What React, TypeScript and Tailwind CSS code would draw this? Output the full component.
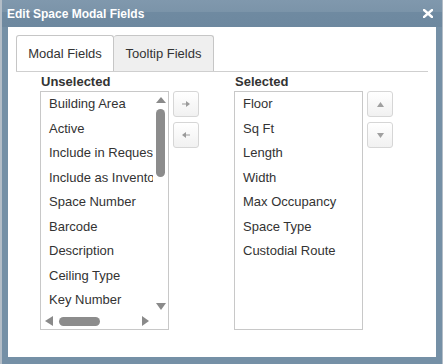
import React from "react";

const unselected = [
  "Building Area",
  "Active",
  "Include in Request",
  "Include as Inventory",
  "Space Number",
  "Barcode",
  "Description",
  "Ceiling Type",
  "Key Number",
];

const selected = ["Floor", "Sq Ft", "Length", "Width", "Max Occupancy", "Space Type", "Custodial Route"];

function Tri({ dir, w, h }: { dir: "up" | "down" | "left" | "right"; w: number; h: number }) {
  const d =
    dir === "up"
      ? `M0 ${h} L${w / 2} 0 L${w} ${h} Z`
      : dir === "down"
      ? `M0 0 L${w} 0 L${w / 2} ${h} Z`
      : dir === "left"
      ? `M${w} 0 L0 ${h / 2} L${w} ${h} Z`
      : `M0 0 L${w} ${h / 2} L0 ${h} Z`;
  return (
    <svg width={w} height={h} viewBox={`0 0 ${w} ${h}`} className="block">
      <path d={d} fill="#8a8a8a" />
    </svg>
  );
}

function SmallBtn({ children }: { children: React.ReactNode }) {
  return (
    <div className="w-[26px] h-[26px] border border-[#d6d6d6] rounded-[3px] bg-gradient-to-b from-white to-[#f1f1f1] flex items-center justify-center">
      {children}
    </div>
  );
}

function Arrow({ left }: { left?: boolean }) {
  return (
    <svg width="8" height="6" viewBox="0 0 8 6" className={left ? "block rotate-180" : "block"}>
      <path d="M0 2.5 H5 V3.5 H0 Z" fill="#9a9a9a" />
      <path d="M4 0 L8 3 L4 6 Z" fill="#9a9a9a" />
    </svg>
  );
}

function SmallTri({ up }: { up?: boolean }) {
  return (
    <svg width="7" height="5" viewBox="0 0 7 5" className="block">
      <path d={up ? "M0 5 L3.5 0 L7 5 Z" : "M0 0 L7 0 L3.5 5 Z"} fill="#a0a0a0" />
    </svg>
  );
}

export default function App() {
  return (
    <div className="w-[443px] h-[364px] bg-[#b3bdc7] font-['Liberation_Sans',Arial,sans-serif] overflow-hidden">
      <div className="ml-[2px] w-[440px] h-[364px] bg-[#7590a6] flex flex-col">
        <div className="h-[27px] flex items-center justify-between pl-[5px] pr-[9px] bg-[linear-gradient(#8098ad_0%,#7b94a9_44%,#6f8aa1_46%,#6d889f_100%)]">
          <span className="text-white text-[12px] font-bold">Edit Space Modal Fields</span>
          <svg width="10" height="9" viewBox="0 0 10 9" className="block">
            <path d="M1 1 L9 8 M9 1 L1 8" stroke="white" strokeWidth="2.4" strokeLinecap="square" />
          </svg>
        </div>

        <div className="mx-[6px] mb-[7px] flex-1 bg-white px-[8px] pt-[8px]">
          <div className="flex border-b border-[#cfcfcf] text-[13px] text-[#333]">
            <div className="w-[98px] h-[36px] border border-[#c6c6c6] border-b-0 rounded-t-[3px] bg-white flex items-center justify-center">
              Modal Fields
            </div>
            <div className="w-[100px] h-[36px] border border-[#c6c6c6] border-b-0 border-l-0 rounded-t-[3px] bg-[#efefef] flex items-center justify-center">
              Tooltip Fields
            </div>
          </div>

          <div className="flex pl-[24px] text-[13px] text-[#333]">
            <div className="flex flex-col">
              <div className="h-[19px] leading-[19px] font-bold pl-[1px]">Unselected</div>
              <div className="w-[129px] h-[239px] border border-[#c8c8c8] flex flex-col">
                <div className="flex h-[221px]">
                  <div className="w-[112px] overflow-hidden">
                    {unselected.map((f) => (
                      <div key={f} className="h-[24.5px] leading-[24.5px] pl-[8px] whitespace-nowrap">
                        {f}
                      </div>
                    ))}
                  </div>
                  <div className="w-[15px] flex flex-col items-center pt-[5px] pb-[3px]">
                    <Tri dir="up" w={10} h={6} />
                    <div className="w-[9px] h-[68px] mt-[6px] rounded-full bg-[#8c8c8c]" />
                    <div className="flex-1" />
                    <Tri dir="down" w={10} h={7} />
                  </div>
                </div>
                <div className="h-[16px] flex items-center pl-[4px]">
                  <Tri dir="left" w={8} h={10} />
                  <div className="w-[41px] h-[9px] ml-[6px] rounded-full bg-[#8c8c8c]" />
                  <div className="w-[42px]" />
                  <Tri dir="right" w={7} h={10} />
                </div>
              </div>
            </div>

            <div className="flex flex-col gap-[5px] pt-[19px] ml-[4px]">
              <SmallBtn>
                <Arrow />
              </SmallBtn>
              <SmallBtn>
                <Arrow left />
              </SmallBtn>
            </div>

            <div className="flex flex-col ml-[35px]">
              <div className="h-[19px] leading-[19px] font-bold pl-[1px]">Selected</div>
              <div className="w-[129px] h-[239px] border border-[#c8c8c8]">
                {selected.map((f) => (
                  <div key={f} className="h-[24.5px] leading-[24.5px] pl-[8px] whitespace-nowrap">
                    {f}
                  </div>
                ))}
              </div>
            </div>

            <div className="flex flex-col gap-[5px] pt-[19px] ml-[4px]">
              <SmallBtn>
                <SmallTri up />
              </SmallBtn>
              <SmallBtn>
                <SmallTri />
              </SmallBtn>
            </div>
          </div>
        </div>
      </div>
    </div>
  );
}
